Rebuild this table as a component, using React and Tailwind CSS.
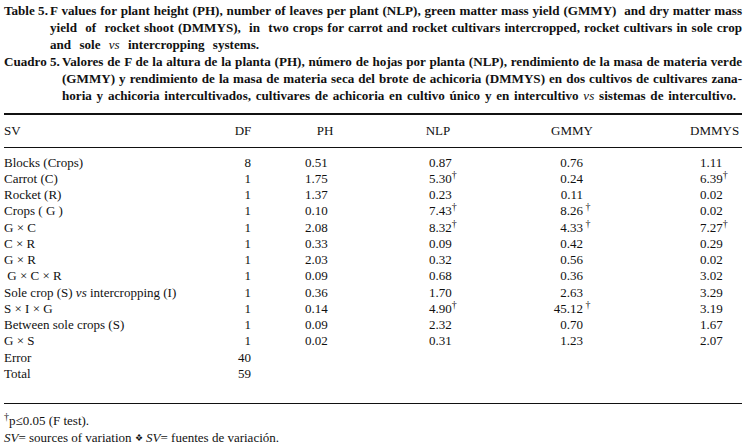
import React from 'react';

const rows = [
  ['Blocks (Crops)', '8', '0.51', ['0.87'], ['0.76'], ['1.11']],
  ['Carrot (C)', '1', '1.75', ['5.30', '†'], ['0.24'], ['6.39', '†']],
  ['Rocket (R)', '1', '1.37', ['0.23'], ['0.11'], ['0.02']],
  ['Crops ( G )', '1', '0.10', ['7.43', '†'], ['8.26', ' †'], ['0.02']],
  ['G × C', '1', '2.08', ['8.32', '†'], ['4.33', ' †'], ['7.27', '†']],
  ['C × R', '1', '0.33', ['0.09'], ['0.42'], ['0.29']],
  ['G × R', '1', '2.03', ['0.32'], ['0.56'], ['0.02']],
  ['\u00a0G × C × R', '1', '0.09', ['0.68'], ['0.36'], ['3.02']],
  ['SOLE', '1', '0.36', ['1.70'], ['2.63'], ['3.29']],
  ['S × I × G', '1', '0.14', ['4.90', '†'], ['45.12', ' †'], ['3.19']],
  ['Between sole crops (S)', '1', '0.09', ['2.32'], ['0.70'], ['1.67']],
  ['G × S', '1', '0.02', ['0.31'], ['1.23'], ['2.07']],
  ['Error', '40', '', null, null, null],
  ['Total', '59', '', null, null, null],
];

const Dag = ({ t }) => (
  <span className="text-[10px] whitespace-pre relative -top-[5px]">{t}</span>
);

const Num = ({ v }) => {
  if (!v) return null;
  return (
    <span className="whitespace-pre">
      {v[0]}
      {v[1] && <Dag t={v[1]} />}
    </span>
  );
};

const Row = ({ r }) => (
  <div className="flex h-[16.25px] items-center leading-none">
    <div className="w-[216px] whitespace-pre">
      {r[0] === 'SOLE' ? (
        <>
          Sole crop (S) <i>vs</i> intercropping (I)
        </>
      ) : (
        r[0]
      )}
    </div>
    <div className="w-[31px] text-right">{r[1]}</div>
    <div className="ml-[54px] w-[33px]">{r[2]}</div>
    <div className="ml-[91px] w-[40px]"><Num v={r[3]} /></div>
    <div className="ml-[83px] w-[52px] whitespace-pre">
      {r[4] && (
        <span className="inline-block w-[31px] text-right">{r[4][0]}</span>
      )}
      {r[4] && r[4][1] && <Dag t={r[4][1]} />}
    </div>
    <div className="ml-[96px] w-[40px]"><Num v={r[5]} /></div>
  </div>
);

export default function App() {
  return (
    <div
      className="w-[746px] h-[446px] bg-white text-[#111] px-[4px] pt-[2px] overflow-hidden"
      style={{ fontFamily: '"Liberation Serif", "DejaVu Serif", serif' }}
    >
      <div className="font-bold text-[13.1px] leading-[17px]">
        <div className="flex">
          <div className="w-[46px] shrink-0">Table 5.</div>
          <div className="flex-1 min-w-0">
            <div className="[text-align-last:justify] text-justify whitespace-nowrap">F values for plant height (PH), number of leaves per plant (NLP), green matter mass yield (GMMY)&nbsp; and dry matter mass</div>
            <div className="[text-align-last:justify] text-justify whitespace-nowrap">yield&nbsp; of&nbsp; rocket shoot (DMMYS),&nbsp; in&nbsp; two crops for carrot and rocket cultivars intercropped, rocket cultivars in sole crop</div>
            <div className="[word-spacing:5px]">and sole <i className="font-normal">vs</i> intercropping systems.</div>
          </div>
        </div>
        <div className="flex">
          <div className="w-[58px] shrink-0">Cuadro 5.</div>
          <div className="flex-1 min-w-0">
            <div className="[text-align-last:justify] text-justify whitespace-nowrap">Valores de F de la altura de la planta (PH), número de hojas por planta (NLP), rendimiento de la masa de materia verde</div>
            <div className="[text-align-last:justify] text-justify whitespace-nowrap">(GMMY) y rendimiento de la masa de materia seca del brote de achicoria (DMMYS) en dos cultivos de cultivares zana-</div>
            <div className="mr-[6px] [text-align-last:justify] text-justify whitespace-nowrap">horia y achicoria intercultivados, cultivares de achicoria en cultivo único y en intercultivo <i className="font-normal">vs</i> sistemas de intercultivo.</div>
          </div>
        </div>
      </div>

      <div className="mt-[9px] h-[1.5px] bg-[#111]" />
      <div className="flex h-[32px] items-center text-[13px] leading-none">
        <div className="w-[216px]">SV</div>
        <div className="w-[46px] text-center">DF</div>
        <div className="ml-[36px] w-[46px] text-center">PH</div>
        <div className="ml-[67px] w-[46px] text-center">NLP</div>
        <div className="ml-[88px] w-[46px] text-center">GMMY</div>
        <div className="ml-[95px] w-[46px] text-center">DMMYS</div>
      </div>
      <div className="h-[1.5px] bg-[#111]" />

      <div className="pt-[6px] text-[13px]">
        {rows.map((r, i) => (
          <Row key={i} r={r} />
        ))}
      </div>

      <div className="mt-[21px] h-[1.5px] bg-[#111]" />
      <div className="pt-[9px] text-[13px] leading-[16px]">
        <div>
          <span className="text-[10px] relative -top-[5px]">†</span>p≤0.05 (F test).
        </div>
        <div>
          <i>SV</i>= sources of variation <span className="text-[9px] relative -top-[1px]">❖</span> <i>SV</i>= fuentes de variación.
        </div>
      </div>
    </div>
  );
}
